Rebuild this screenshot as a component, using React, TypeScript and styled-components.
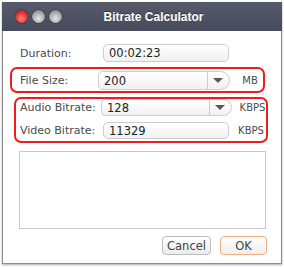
import React from "react";
import styled, { createGlobalStyle } from "styled-components";

const Global = createGlobalStyle`
  html, body { margin: 0; padding: 0; background: #ffffff; }
  body { width: 284px; height: 267px; overflow: hidden; font-family: "DejaVu Sans", "Liberation Sans", sans-serif; }
`;

const Window = styled.div`
  margin: 2px 0 0 2px;
  width: 280px;
  height: 262px;
  box-sizing: border-box;
  border: 1px solid #8c8c8c;
  border-top: none;
  background: #ffffff;
  box-shadow: 0 1px 2px rgba(0, 0, 0, 0.35);
  display: flex;
  flex-direction: column;
`;

const TitleBar = styled.div`
  height: 29px;
  margin: 0 -1px;
  background: linear-gradient(#565a6b, #474a5b);
  display: flex;
  align-items: center;
  padding-left: 13px;
`;

const Lights = styled.div`
  display: flex;
  gap: 4px;
`;

const Light = styled.span<{ $red?: boolean }>`
  width: 13px;
  height: 13px;
  border-radius: 50%;
  background: ${(p) =>
    p.$red
      ? "radial-gradient(circle at 50% 65%, #ff8a80 0%, #e0322a 55%, #a81d18 100%)"
      : "radial-gradient(circle at 50% 65%, #e8e8e8 0%, #a9a9a9 55%, #6f6f6f 100%)"};
  box-shadow: 0 0 0 0.5px rgba(0, 0, 0, 0.5);
`;

const Title = styled.div`
  flex: 1;
  text-align: center;
  color: #ffffff;
  font-family: "Liberation Sans", Arial, sans-serif;
  font-weight: bold;
  font-size: 12px;
  padding-right: 37px;
  text-shadow: 0 -1px 0 rgba(0, 0, 0, 0.4);
`;

const Body = styled.div`
  display: flex;
  flex-direction: column;
  padding-top: 13px;
`;

const Row = styled.div<{ $h: number; $label: number }>`
  display: grid;
  grid-template-columns: ${(p) => p.$label}px auto auto;
  align-items: center;
  height: ${(p) => p.$h}px;
`;

const Label = styled.span`
  font-size: 11px;
  color: #4a4a4a;
  white-space: nowrap;
`;

const Unit = styled.span`
  font-size: 10px;
  color: #4a4a4a;
  margin-left: 7px;
`;

const Field = styled.div<{ $w: number }>`
  width: ${(p) => p.$w}px;
  height: 100%;
  box-sizing: border-box;
  border: 1px solid #cdcdcd;
  border-radius: 5px;
  background: linear-gradient(#ffffff, #f1f1f1);
  display: flex;
  align-items: center;
  padding-left: 5px;
  font-size: 11.5px;
  color: #222;
`;

const Select = styled(Field)`
  border-radius: 5px 10px 10px 5px;
  padding-left: 0;
`;

const SelectValue = styled.span`
  flex: 1;
  padding-left: 5px;
`;

const Arrow = styled.span`
  width: 21px;
  height: 100%;
  border-left: 1px solid #cdcdcd;
  display: flex;
  align-items: center;
  justify-content: center;
  &::after {
    content: "";
    border-left: 5px solid transparent;
    border-right: 5px solid transparent;
    border-top: 5px solid #5a5a5a;
    margin-left: -2px;
  }
`;

const Plain = styled.div`
  margin-left: 17px;
`;

const Highlight = styled.div<{ $left: number; $w: number; $top: number }>`
  margin-left: ${(p) => p.$left}px;
  margin-top: ${(p) => p.$top}px;
  width: ${(p) => p.$w}px;
  box-sizing: border-box;
  border: 2px solid #ee1c1c;
  border-radius: 7px;
  display: flex;
  flex-direction: column;
`;

const GroupInner = styled.div<{ $pad: string; $gap?: number }>`
  display: flex;
  flex-direction: column;
  padding: ${(p) => p.$pad};
  gap: ${(p) => p.$gap ?? 0}px;
`;

const TextBox = styled.div`
  margin: 8px 0 0 16px;
  width: 247px;
  height: 78px;
  box-sizing: border-box;
  border: 1px solid #c9c9c9;
  background: #fff;
`;

const Buttons = styled.div`
  display: flex;
  justify-content: flex-end;
  gap: 9px;
  margin-top: 7px;
  padding-right: 14px;
`;

const Button = styled.button<{ $default?: boolean; $w: number }>`
  flex: 0 0 ${(p) => p.$w}px;
  width: ${(p) => p.$w}px;
  height: 19px;
  padding: 0;
  margin: 0;
  border-radius: 4px;
  border: 1px solid ${(p) => (p.$default ? "#eeae7e" : "#bdbdbd")};
  background: ${(p) =>
    p.$default ? "linear-gradient(#ffffff, #f3eee9)" : "linear-gradient(#ffffff, #ebebeb)"};
  font-family: "DejaVu Sans", sans-serif;
  font-size: 11.5px;
  color: #444;
`;

export default function App() {
  return (
    <>
      <Global />
      <Window>
        <TitleBar>
          <Lights>
            <Light $red />
            <Light />
            <Light />
          </Lights>
          <Title>Bitrate Calculator</Title>
        </TitleBar>
        <Body>
          <Plain>
            <Row $h={18} $label={83}>
              <Label>Duration:</Label>
              <Field $w={126}>00:02:23</Field>
            </Row>
          </Plain>
          <Highlight $left={7} $w={255} $top={5}>
            <GroupInner $pad="2px 0 1px 8px">
              <Row $h={19} $label={78}>
                <Label>File Size:</Label>
                <Select $w={132}>
                  <SelectValue>200</SelectValue>
                  <Arrow />
                </Select>
                <Unit>MB</Unit>
              </Row>
            </GroupInner>
          </Highlight>
          <Highlight $left={11} $w={254} $top={4}>
            <GroupInner $pad="0 0 2px 4px" $gap={6}>
              <Row $h={17} $label={81}>
                <Label>Audio Bitrate:</Label>
                <Select $w={131}>
                  <SelectValue>128</SelectValue>
                  <Arrow />
                </Select>
                <Unit>KBPS</Unit>
              </Row>
              <Row $h={17} $label={83}>
                <Label>Video Bitrate:</Label>
                <Field $w={126}>11329</Field>
                <Unit>KBPS</Unit>
              </Row>
            </GroupInner>
          </Highlight>
          <TextBox />
          <Buttons>
            <Button $w={49}>Cancel</Button>
            <Button $w={47} $default>
              OK
            </Button>
          </Buttons>
        </Body>
      </Window>
    </>
  );
}
